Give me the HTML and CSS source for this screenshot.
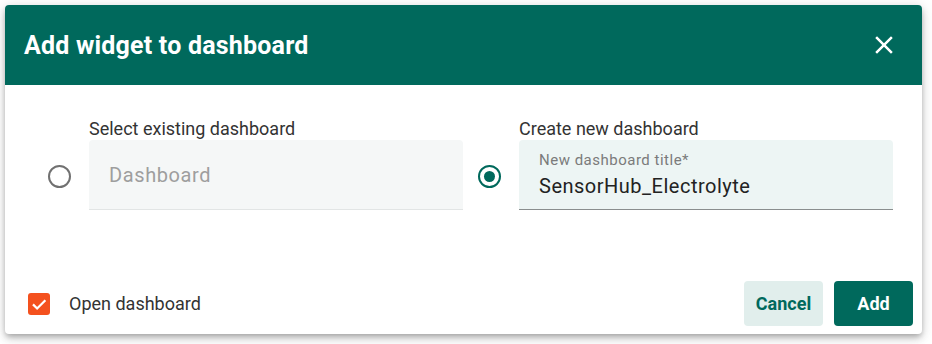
FILE: index.html
```html
<!DOCTYPE html>
<html>
<head>
<meta charset="utf-8">
<link rel="stylesheet" href="styles.css">
</head>
<body>
<div class="page">
  <div class="dialog">
    <div class="header">
      <h1 class="title">Add widget to dashboard</h1>
      <button class="close" aria-label="Close">
        <svg width="30" height="30" viewBox="0 0 24 24"><path d="M19 6.41 17.59 5 12 10.59 6.41 5 5 6.41 10.59 12 5 17.59 6.41 19 12 13.41 17.59 19 19 17.59 13.41 12z" fill="#fff"/></svg>
      </button>
    </div>
    <div class="content">
      <div class="option">
        <span class="radio"></span>
        <div class="group">
          <div class="group-label">Select existing dashboard</div>
          <div class="field field-disabled">
            <span class="placeholder">Dashboard</span>
          </div>
        </div>
      </div>
      <div class="option">
        <span class="radio radio-checked"><span class="dot"></span></span>
        <div class="group">
          <div class="group-label">Create new dashboard</div>
          <div class="field field-active">
            <span class="float-label">New dashboard title*</span>
            <span class="value">SensorHub_Electrolyte</span>
          </div>
        </div>
      </div>
    </div>
    <div class="footer">
      <label class="check">
        <span class="box">
          <svg width="18" height="18" viewBox="0 0 24 24"><path d="M4 12.5l5.5 5.5L20.5 7" stroke="#fff" stroke-width="3" fill="none"/></svg>
        </span>
        <span class="check-text">Open dashboard</span>
      </label>
      <div class="actions">
        <button class="btn btn-cancel">Cancel</button>
        <button class="btn btn-add">Add</button>
      </div>
    </div>
  </div>
</div>
</body>
</html>
```
FILE: styles.css
```css
* { box-sizing: border-box; }
html, body { margin: 0; padding: 0; background: #fff; }
body { font-family: Roboto, "Noto Sans", sans-serif; }
.page { padding: 5px 10px 10px 5px; }
.dialog {
  width: 917px;
  height: 329px;
  background: #fff;
  border-radius: 4px;
  box-shadow: 0 3px 5px -1px rgba(0,0,0,.2), 0 5px 8px 0 rgba(0,0,0,.14), 0 1px 14px 0 rgba(0,0,0,.12);
  display: flex;
  flex-direction: column;
  overflow: hidden;
}
.header {
  height: 80px;
  flex: none;
  background: #00695c;
  display: flex;
  align-items: center;
  justify-content: space-between;
  padding: 0 23px 0 19px;
}
.title {
  margin: 0;
  color: #fff;
  font-size: 25px;
  font-weight: 700;
  letter-spacing: 0.2px;
}
.close {
  background: none;
  border: 0;
  padding: 0;
  width: 30px;
  height: 30px;
  display: flex;
  cursor: pointer;
}
.content {
  display: flex;
  align-items: flex-start;
  gap: 15px;
  padding: 33px 29px 0 43px;
}
.option {
  display: flex;
  align-items: flex-end;
  gap: 18px;
}
.radio {
  width: 23px;
  height: 23px;
  border: 2px solid #717171;
  border-radius: 50%;
  margin-bottom: 22px;
  display: flex;
  align-items: center;
  justify-content: center;
}
.radio-checked { border-color: #00695c; }
.dot { width: 11px; height: 11px; border-radius: 50%; background: #00695c; }
.group { width: 374px; }
.group-label {
  font-size: 18px;
  color: #333;
  line-height: 22px;
  height: 22px;
}
.field {
  height: 70px;
  border-radius: 4px 4px 0 0;
  padding: 0 20px;
  display: flex;
  flex-direction: column;
  justify-content: center;
}
.field-disabled {
  background: #f5f7f7;
  border-bottom: 1px solid #e2e5e5;
}
.field-active {
  background: #edf5f4;
  border-bottom: 1px solid #8a8e8e;
}
.placeholder { font-size: 20px; color: #9e9e9e; letter-spacing: 0.6px; }
.float-label { font-size: 15px; color: #7b7b7b; line-height: 18px; letter-spacing: 0.5px; }
.value { font-size: 20px; color: #222; line-height: 26px; margin-top: 4px; letter-spacing: 0.5px; }
.footer {
  flex: 1;
  display: flex;
  align-items: flex-end;
  justify-content: space-between;
  padding: 0 9px 8px 23px;
}
.check {
  display: flex;
  align-items: center;
  gap: 19px;
  height: 45px;
}
.box {
  width: 22px;
  height: 22px;
  background: #f4511e;
  border-radius: 3px;
  display: flex;
  align-items: center;
  justify-content: center;
}
.check-text { font-size: 18px; color: #333; }
.actions { display: flex; gap: 11px; }
.btn {
  height: 45px;
  width: 79px;
  border: 0;
  border-radius: 4px;
  font-family: Roboto, sans-serif;
  font-size: 18px;
  font-weight: 700;
}
.btn-cancel { background: #e1eeec; color: #00695c; }
.btn-add { background: #00695c; color: #fff; }
```
